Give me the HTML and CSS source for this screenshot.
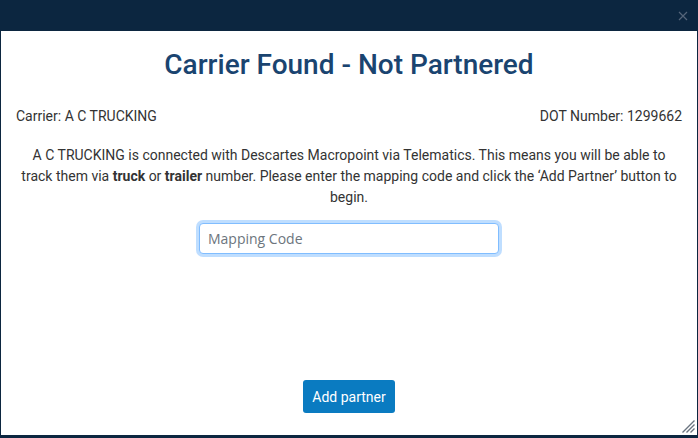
FILE: index.html
```html
<!DOCTYPE html>
<html lang="en">
<head>
  <meta charset="UTF-8" />
  <meta name="viewport" content="width=device-width, initial-scale=1.0" />
  <title>Carrier Found - Not Partnered</title>
  <link rel="stylesheet" href="styles.css">
</head>
<body>
  <div class="dialog">
    <div class="dialog-bar">
      <button class="dialog-close" type="button" aria-label="Close">
        <svg width="10" height="10" viewBox="0 0 10 10">
          <path d="M1 1 L9 9 M9 1 L1 9" stroke="#55657a" stroke-width="1.2" fill="none" />
        </svg>
      </button>
    </div>

    <main class="dialog-body">
      <h1>Carrier Found - Not Partnered</h1>

      <div class="carrier-info">
        <span>Carrier: A C TRUCKING</span>
        <span>DOT Number: 1299662</span>
      </div>

      <p class="carrier-note">
        A C TRUCKING is connected with Descartes Macropoint via Telematics. This means you will be able to
        track them via <strong>truck</strong> or <strong>trailer</strong> number. Please enter the mapping code and click the &lsquo;Add Partner&rsquo; button to
        begin.
      </p>

      <form class="mapping-form">
        <input type="text" name="mapping" placeholder="Mapping Code" />
      </form>

      <div class="dialog-footer">
        <button class="btn-primary" type="button">Add partner</button>
      </div>

      <svg class="resize-grip" width="14" height="14" viewBox="0 0 14 14">
        <path d="M13.5 1.5 L1.5 13.5 M13.5 5.5 L5.5 13.5 M13.5 9.5 L9.5 13.5" stroke="#6b7480" stroke-width="1.4" fill="none" />
      </svg>
    </main>
  </div>
</body>
</html>
```

FILE: styles.css
```css
html {
  background-color: #0c2640;
  height: 100%;
}
body {
  margin: 0;
  padding: 0;
  font-family: Roboto, 'Liberation Sans', sans-serif;
  font-size: 14px;
  line-height: 1.5;
  color: #333333;
  background-color: #0c2640;
}
.dialog {
  display: flex;
  flex-direction: column;
  height: 438px;
}
.dialog-bar {
  height: 31px;
  display: flex;
  justify-content: flex-end;
  align-items: center;
  padding-right: 10px;
}
.dialog-close {
  background: none;
  border: none;
  padding: 0;
  width: 10px;
  height: 10px;
  display: flex;
}
.dialog-body {
  position: relative;
  flex: 1;
  margin: 0 1px 3px 1px;
  background: #ffffff;
  display: flex;
  flex-direction: column;
  padding: 0 15px;
}
.dialog-body h1 {
  margin: 17px 0 0;
  font-size: 28px;
  font-weight: 500;
  line-height: 1.2;
  text-align: center;
  color: #1a4470;
}
.carrier-info {
  display: flex;
  justify-content: space-between;
  margin-top: 24px;
}
.carrier-note {
  margin: 18px 0 0;
  text-align: center;
}
.mapping-form {
  display: flex;
  justify-content: center;
  margin-top: 15px;
}
.mapping-form input {
  width: 300px;
  height: 31px;
  box-sizing: border-box;
  padding: 4px 8px;
  font-family: 'Open Sans', Roboto, sans-serif;
  font-size: 14px;
  color: #495057;
  border: 1px solid #80bdff;
  border-radius: 4px;
  box-shadow: 0 0 0 3px rgba(0, 123, 255, 0.25);
  outline: none;
}
.mapping-form input::placeholder {
  color: #6c757d;
}
.dialog-footer {
  margin-top: auto;
  margin-bottom: 22px;
  display: flex;
  justify-content: center;
}
.btn-primary {
  background-color: #0a7bc1;
  color: #ffffff;
  border: none;
  border-radius: 3px;
  width: 92px;
  height: 33px;
  font-family: Roboto, 'Liberation Sans', sans-serif;
  font-size: 14px;
  cursor: pointer;
}
.resize-grip {
  position: absolute;
  right: 2px;
  bottom: 2px;
}
```
